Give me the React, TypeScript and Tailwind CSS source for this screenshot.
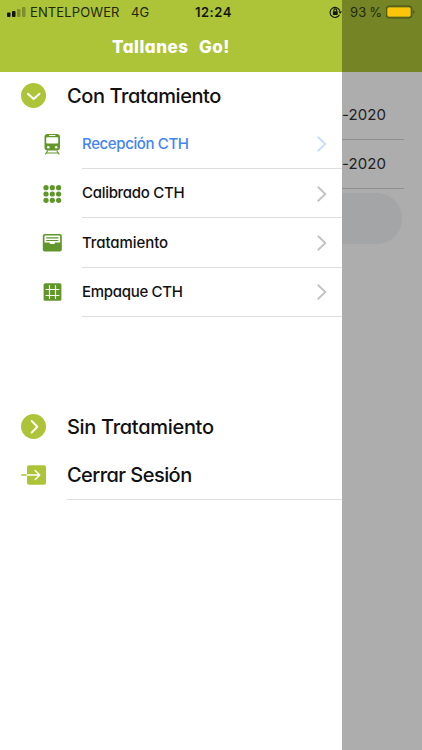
import type { ReactNode } from 'react';

function TrainIcon() {
  return (
    <svg viewBox="0 0 20 22" className="h-[22px] w-5" fill="none">
      <path d="M5.500 1h9Q18 1 18 4v10.500Q18 17.500 14.500 17.500h-9Q2.500 17.500 2.500 14.500V4Q2.500 1 5.500 1Z" fill="#60962a" />
      <path d="M7.500 2.500h5.500" stroke="#fff" strokeWidth="1" strokeLinecap="round" />
      <rect x="4.200" y="4.300" width="12" height="6.200" rx="1" fill="#fff" />
      <circle cx="6.300" cy="14.300" r="1.300" fill="#fff" />
      <circle cx="14.200" cy="14.300" r="1.300" fill="#fff" />
      <path d="M5.500 18 3.500 21M15 18l2 3M4.300 20h12" stroke="#60962a" strokeWidth="1.200" strokeLinecap="round" />
    </svg>
  );
}

function KeypadIcon() {
  return (
    <svg viewBox="0 0 20 20" className="size-5" fill="#60962a">
      {[3.700, 10, 16.300].map((y) =>
        [4, 10.300, 16.600].map((x) => <circle key={`${x}-${y}`} cx={x} cy={y} r="2.600" />),
      )}
    </svg>
  );
}

function FilingIcon() {
  return (
    <svg viewBox="0 0 20 20" className="size-5" fill="none">
      <rect x="0.800" y="1" width="19" height="17.500" rx="2" fill="#60962a" />
      <path d="M2.500 3.300Q2.500 2.500 3.300 2.500h14q.8 0 .8.800V9.500H13q0 1.500-1.500 1.500H9Q7.500 11 7.500 9.500h-5Z" fill="#fff" />
      <path d="M4.200 4.900h12.200M4.200 7.500h12.200" stroke="#60962a" strokeWidth="1.200" />
    </svg>
  );
}

function GridIcon() {
  return (
    <svg viewBox="0 0 20 20" className="size-5" fill="none">
      <rect x="1.600" y="1.200" width="17.800" height="17.600" rx="1.500" fill="#60962a" />
      <path d="M7.500 3.600v12.800M13.500 3.600v12.800M4 7.500h13M4 13.500h13" stroke="#f4faed" strokeWidth="1.200" strokeLinecap="round" />
    </svg>
  );
}

function CircleChevron({ down }: { down?: boolean }) {
  return (
    <svg viewBox="0 0 26 26" className="size-[26px]" fill="none">
      <circle cx="12.500" cy="12.500" r="12.500" fill="#adc439" />
      <path d={down ? 'M6.900 10.700l5.800 5.400 5.800-5.400' : 'M10.700 7l5.600 5.800-5.600 5.800'} stroke="#fff" strokeWidth="2" strokeLinecap="round" strokeLinejoin="round" />
    </svg>
  );
}

function ExitIcon() {
  return (
    <svg viewBox="0 0 26 26" className="size-[26px]" fill="none">
      <rect x="6" y="3.200" width="19" height="19.500" rx="2" fill="#adc439" />
      <path d="M0.700 13H6" stroke="#adc439" strokeWidth="1.400" strokeLinecap="round" />
      <path d="M6 13h12.500M14.200 8.500l4.500 4.500-4.500 4.500" stroke="#fff" strokeWidth="1.500" strokeLinecap="round" strokeLinejoin="round" />
    </svg>
  );
}

function StatusBar() {
  return (
    <div className="absolute inset-x-0 top-0 z-20 flex h-6 items-center text-[13px] leading-6 text-[#22280a]">
      <svg viewBox="0 0 20 10" className="ml-[7px] h-2.5 w-5 shrink-0" fill="#11150a">
        <rect x="0" y="5.500" width="3.500" height="4.500" rx="1" />
        <rect x="5" y="4" width="3.500" height="6" rx="1" />
        <rect x="10" y="2" width="3.500" height="8" rx="1" opacity=".3" />
        <rect x="15" y="0" width="3.500" height="10" rx="1" opacity=".3" />
      </svg>
      <span className="ml-[3px] w-[101px] whitespace-nowrap tracking-[0.120px]">ENTELPOWER</span>
      <span className="w-16">4G</span>
      <span className="w-[134px] font-semibold tracking-[0.500px] text-[#11150a]">12:24</span>
      <svg viewBox="0 0 14 12" className="h-3 w-3.5 shrink-0" fill="none" stroke="#11150a" strokeWidth="1.100">
        <path d="M10.500 8.800A5 5 0 1 1 11 5.500" />
        <path d="m9.300 5.400 1.900 2.300 1.900-2.300Z" fill="#11150a" stroke="none" />
        <rect x="3.900" y="5.300" width="4.800" height="3.600" rx=".5" fill="#11150a" stroke="none" />
        <path d="M4.900 5.600V4.300q0-1.400 1.400-1.400t1.400 1.400v1.300" />
      </svg>
      <span className="ml-[7px] w-9 whitespace-nowrap tracking-[0.300px] [word-spacing:-1.500px]">93 %</span>
      <svg viewBox="0 0 30 14" className="h-3.5 w-[30px] shrink-0" fill="none">
        <rect x="0.200" y="1.200" width="25.600" height="11.600" rx="3" stroke="#4d5615" strokeWidth="1.200" />
        <rect x="1.500" y="2.500" width="23" height="9" rx="1.500" fill="#fdc50a" />
        <path d="M27.200 5v4q1.300-.6 1.300-2t-1.300-2Z" fill="#4d5615" />
      </svg>
    </div>
  );
}

function MenuItem({ icon, label, active, spacing = 'tracking-[-0.300px]' }: { icon: ReactNode; label: string; active?: boolean; spacing?: string }) {
  return (
    <li className="flex h-[49.400px] pl-[42px]">
      <div className="flex w-10 items-center">{icon}</div>
      <div className={`flex flex-1 items-center justify-between border-b border-[#dedede] pr-[15px] pt-px text-[15px] font-[450] ${spacing} ${active ? 'text-[#4385ed]' : 'text-[#111]'}`}>
        <span>{label}</span>
        <svg viewBox="0 0 10 16" className="h-4 w-2.5" fill="none" stroke={active ? '#cbdcf7' : '#c3c3c3'} strokeWidth="1.900">
          <path d="m1.300 1.300 7 6.700-7 6.700" strokeLinecap="round" strokeLinejoin="round" />
        </svg>
      </div>
    </li>
  );
}

export default function App() {
  return (
    <main className="relative h-[750px] w-[422px] overflow-hidden bg-white font-['Inter',sans-serif]">
      <StatusBar />
      <header className="flex h-[72px] justify-center bg-[#adc439] pr-20 pt-[35px]">
        <h1 className="text-[17px] font-extrabold leading-6 tracking-[0.550px] text-white [font-feature-settings:'cv11'] [word-spacing:6px]">Tallanes Go!</h1>
      </header>
      <div className="flex h-[678px]">
        <aside className="w-[342px] [font-feature-settings:'cv11']">
          <div className="flex h-[47.500px] items-center pl-[21px]">
            <CircleChevron down />
            <h2 className="ml-5 text-[20px] font-[450] tracking-[-0.400px] text-[#111]">Con Tratamiento</h2>
          </div>
          <ul>
            <MenuItem active icon={<TrainIcon />} label="Recepción CTH" spacing="tracking-[-0.380px]" />
            <MenuItem icon={<KeypadIcon />} label="Calibrado CTH" />
            <MenuItem icon={<FilingIcon />} label="Tratamiento" spacing="tracking-[-0.080px]" />
            <MenuItem icon={<GridIcon />} label="Empaque CTH" />
          </ul>
          <div className="mt-[85px] flex h-[49px] items-center pl-[21px]">
            <CircleChevron />
            <h2 className="ml-5 text-[20px] font-[450] tracking-[-0.300px] text-[#111]">Sin Tratamiento</h2>
          </div>
          <div className="flex h-[49px] pl-[21px]">
            <div className="flex w-[46px] items-center pb-px"><ExitIcon /></div>
            <h2 className="flex flex-1 items-center border-b border-[#dedede] text-[20px] font-[450] tracking-[-0.550px] text-[#111]">Cerrar Sesión</h2>
          </div>
        </aside>
        <section className="flex-1 pt-[19px] text-[15px] tracking-[0.100px] text-[#303030]">
          <div className="mr-[18px] flex h-[49px] items-center border-b border-[#d2d2d2]">-2020</div>
          <div className="mr-[18px] flex h-[49px] items-center border-b border-[#d2d2d2] pt-px">-2020</div>
          <div className="mr-5 mt-1 h-[51px] rounded-r-[25px] bg-[#f0f3f6]" />
        </section>
      </div>
      <div className="absolute inset-y-0 right-0 z-10 w-20 bg-black/32" />
    </main>
  );
}
